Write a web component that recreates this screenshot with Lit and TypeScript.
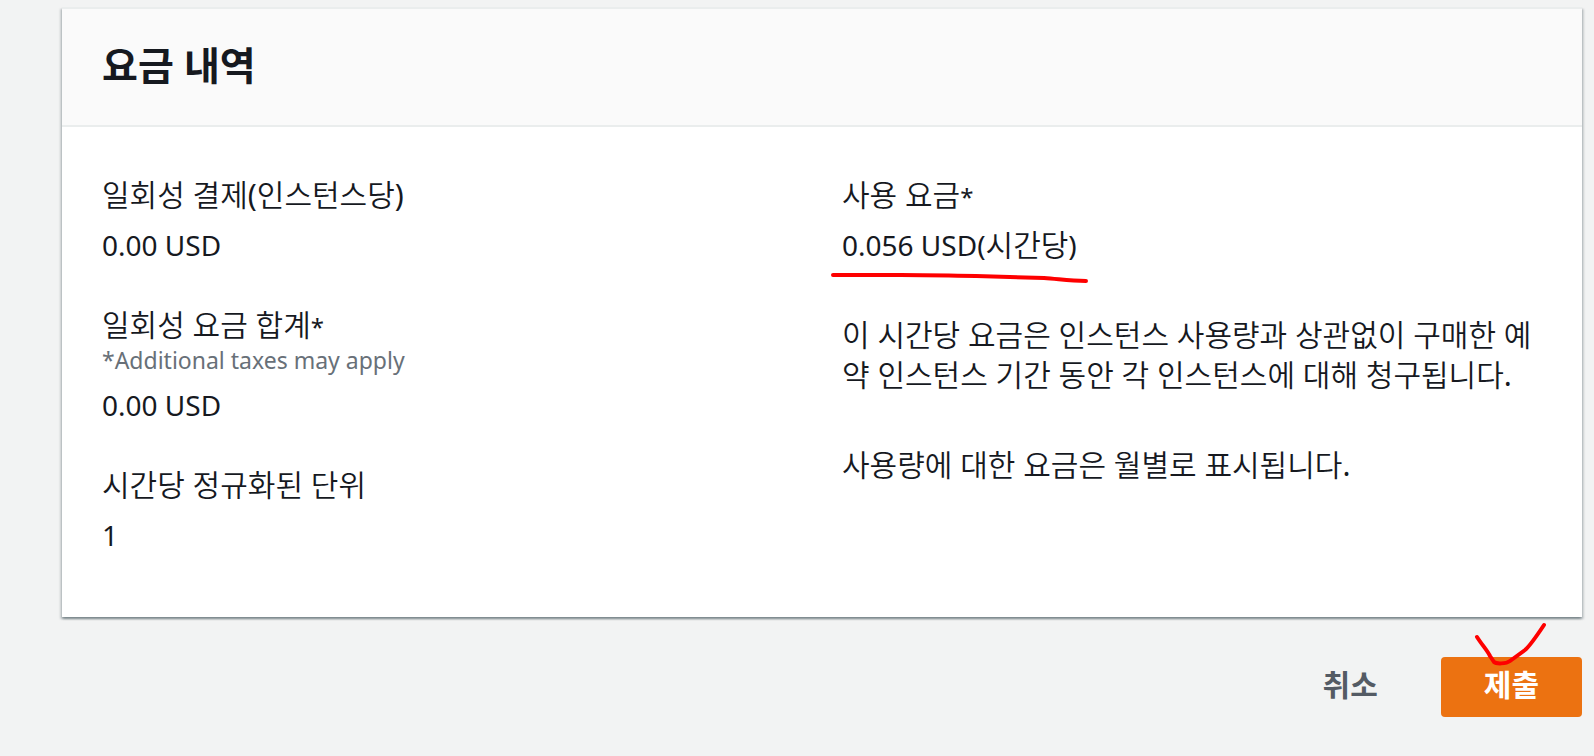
import { LitElement, html, css } from "lit";
import { customElement } from "lit/decorators.js";

@customElement("app-root")
export class AppRoot extends LitElement {
  static styles = css`
    :host {
      display: block;
      box-sizing: border-box;
      min-height: 100vh;
      padding: 7px 12px 38px 62px;
      background: #f2f3f3;
      color: #16191f;
      font-family: "Noto Sans", "Noto Sans CJK KR", sans-serif;
      font-size: 28px;
      line-height: 40px;
    }
    .card {
      border-top: 2px solid #eaeded;
      background: #fff;
      box-shadow:
        0 2px 2px 0 rgba(0, 28, 36, 0.3),
        2px 2px 2px 0 rgba(0, 28, 36, 0.15),
        -2px 2px 2px 0 rgba(0, 28, 36, 0.15);
    }
    .head {
      padding: 26px 40px 30px;
      border-bottom: 2px solid #eaeded;
      background: #fafafa;
    }
    .title {
      margin: 0;
      font-size: 39px;
      line-height: 60px;
      font-weight: 700;
    }
    .body {
      display: grid;
      grid-template-columns: 1fr 1fr;
      gap: 40px;
      padding: 48px 40px 62px;
    }
    .fields {
      display: flex;
      flex-direction: column;
      gap: 40px;
      margin: 0;
    }
    .label,
    .value {
      margin: 0;
    }
    .value {
      margin-top: 10px;
    }
    .ko {
      font-family: "Noto Sans", "Noto Sans CJK KR DemiLight", "Noto Sans CJK KR", sans-serif;
      font-size: 30px;
    }
    .star {
      font-size: 24px;
    }
    span.ko,
    .star {
      line-height: 1;
    }
    .note {
      display: block;
      color: #687078;
      font-size: 23px;
      line-height: 30px;
    }
    .text {
      margin: 50px 0;
    }
    .marked {
      position: relative;
    }
    .ink {
      position: absolute;
      overflow: visible;
      pointer-events: none;
      fill: none;
      stroke: #fe0000;
      stroke-width: 4;
      stroke-linecap: round;
      stroke-linejoin: round;
    }
    .underline {
      left: -11px;
      top: 46px;
    }
    .check {
      left: 34px;
      top: -34px;
    }
    .actions {
      display: flex;
      justify-content: flex-end;
      gap: 20px;
      margin-top: 40px;
    }
    .button {
      position: relative;
      height: 60px;
      padding: 0 43px 4px;
      border: 0;
      border-radius: 4px;
      background: transparent;
      color: #545b64;
      font: inherit;
      font-size: 30px;
      font-weight: 700;
      cursor: pointer;
    }
    .primary {
      background: #ec7211;
      color: #fff;
    }
  `;

  render() {
    return html`
      <section class="card" aria-labelledby="title">
        <header class="head"><h2 class="title" id="title">요금 내역</h2></header>
        <div class="body">
          <dl class="fields">
            <div>
              <dt class="label ko">일회성 결제(인스턴스당)</dt>
              <dd class="value">0.00 USD</dd>
            </div>
            <div>
              <dt class="label"><span class="ko">일회성 요금 합계</span><span class="star">*</span><small class="note">*Additional taxes may apply</small></dt>
              <dd class="value">0.00 USD</dd>
            </div>
            <div>
              <dt class="label ko">시간당 정규화된 단위</dt>
              <dd class="value">1</dd>
            </div>
          </dl>
          <div>
            <dl class="fields">
              <div>
                <dt class="label"><span class="ko">사용 요금</span><span class="star">*</span></dt>
                <dd class="value">
                  <span class="marked">0.056 USD(<span class="ko">시간당</span>)<svg class="ink underline" width="258" height="12" viewBox="0 0 258 12" aria-hidden="true">
                      <path d="M2 3 H70 C105 3 125 4 145 4 L213 6 C228 7 238 9 255 9" />
                    </svg></span>
                </dd>
              </div>
            </dl>
            <p class="text ko">이 시간당 요금은 인스턴스 사용량과 상관없이 구매한 예약 인스턴스 기간 동안 각 인스턴스에 대해 청구됩니다.</p>
            <p class="text ko">사용량에 대한 요금은 월별로 표시됩니다.</p>
          </div>
        </div>
      </section>
      <div class="actions">
        <button class="button" type="button">취소</button>
        <button class="button primary" type="submit">
          제출<svg class="ink check" width="72" height="44" viewBox="0 0 72 44" aria-hidden="true">
            <path d="M2 14 L4 17 C8 23 12 27 15 33 L19 39 C21 41 31 41 35 38 L50 27 C55 23 61 14 69 2" />
          </svg>
        </button>
      </div>
    `;
  }
}
